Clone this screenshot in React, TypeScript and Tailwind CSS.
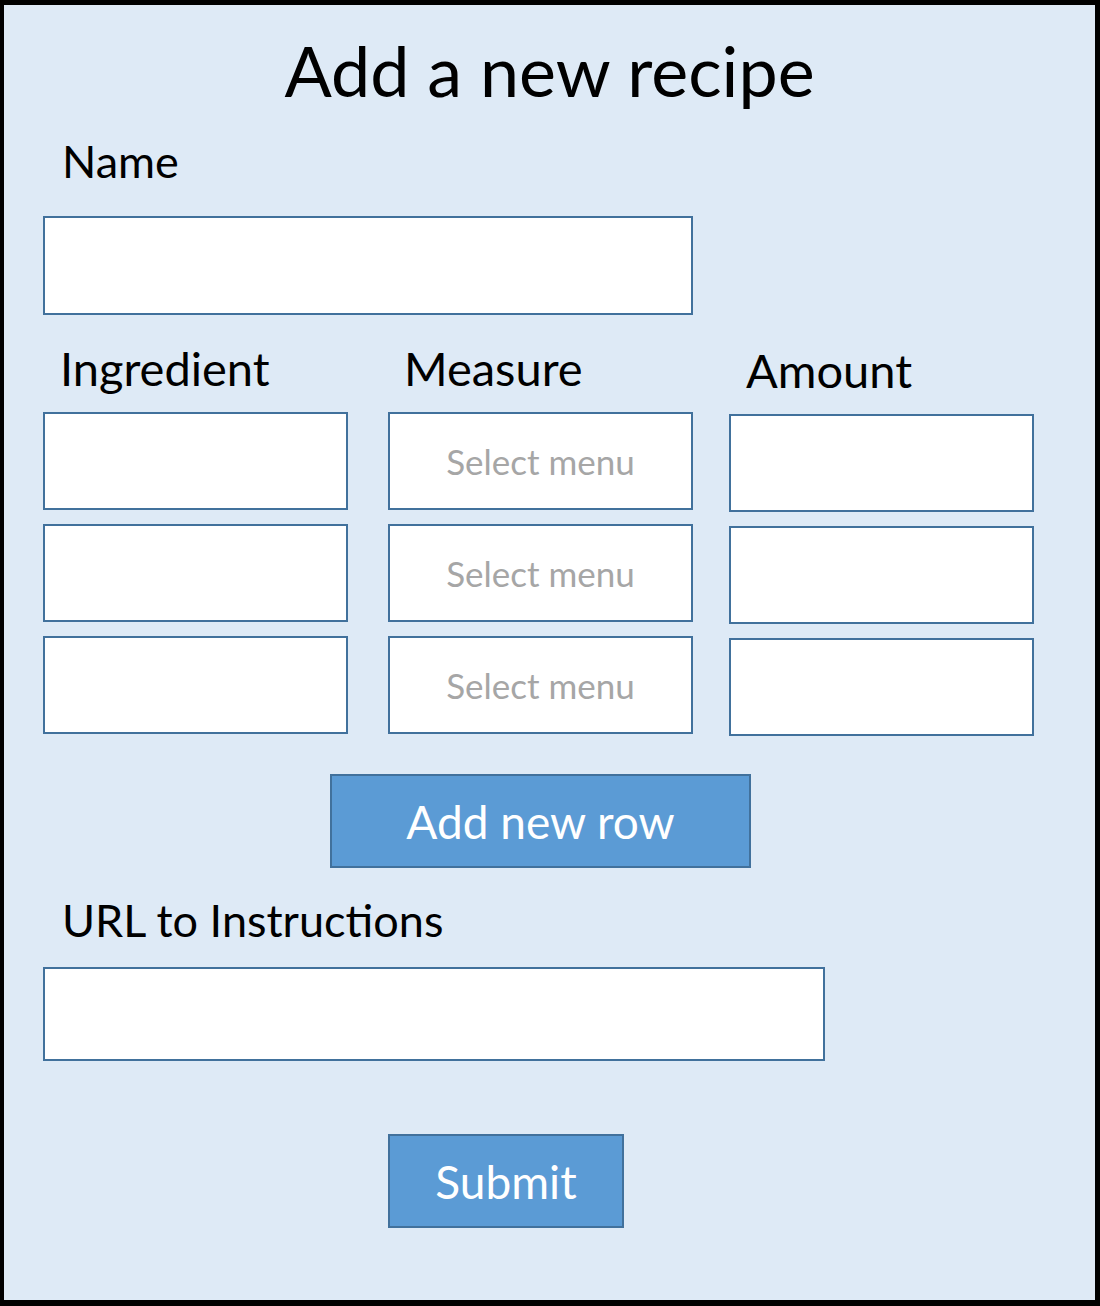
import React from 'react';

const boxCls = 'h-[98px] w-[305px] bg-white border-2 border-[#41719c]';

const Field: React.FC<{ placeholder?: string }> = ({ placeholder }) => (
  <div className={`${boxCls} flex items-center justify-center`}>
    {placeholder && <span className="text-[35px] text-[#a6a6a6]">{placeholder}</span>}
  </div>
);

const App: React.FC = () => {
  const rows = [0, 1, 2];

  return (
    <div className="w-[1100px] h-[1306px] bg-[#deeaf6] border-black border-t-[5px] border-l-4 border-r-[5px] border-b-[6px] font-['Lato',sans-serif] text-black">
      <h1 className="text-center text-[70px] leading-none pt-[30px]">Add a new recipe</h1>

      <div className="pl-[39px]">
        <label className="block pl-[19px] mt-[34px] text-[45px] leading-none">Name</label>
        <div className="mt-[32px] h-[99px] w-[650px] bg-white border-2 border-[#41719c]" />

        <div className="mt-[30px] flex">
          <div className="flex flex-col gap-[14px]">
            <label className="pl-[17px] mb-[6px] text-[47px] leading-none">Ingredient</label>
            {rows.map((r) => (
              <Field key={r} />
            ))}
          </div>
          <div className="ml-[40px] flex flex-col gap-[14px]">
            <label className="pl-[16px] mb-[6px] text-[47px] leading-none">Measure</label>
            {rows.map((r) => (
              <Field key={r} placeholder="Select menu" />
            ))}
          </div>
          <div className="ml-[36px] mt-[2px] flex flex-col gap-[14px]">
            <label className="pl-[17px] mb-[6px] text-[47px] leading-none">Amount</label>
            {rows.map((r) => (
              <Field key={r} />
            ))}
          </div>
        </div>

        <button className="mt-[38px] ml-[287px] block h-[94px] w-[421px] bg-[#5b9bd5] border-2 border-[#41719c] text-white text-[46px]">
          Add new row
        </button>

        <label className="block pl-[19px] mt-[30px] text-[45px] leading-none">URL to Instructions</label>
        <div className="mt-[24px] h-[94px] w-[782px] bg-white border-2 border-[#41719c]" />

        <button className="mt-[73px] ml-[345px] block h-[94px] w-[236px] bg-[#5b9bd5] border-2 border-[#41719c] text-white text-[46px]">
          Submit
        </button>
      </div>
    </div>
  );
};

export default App;
